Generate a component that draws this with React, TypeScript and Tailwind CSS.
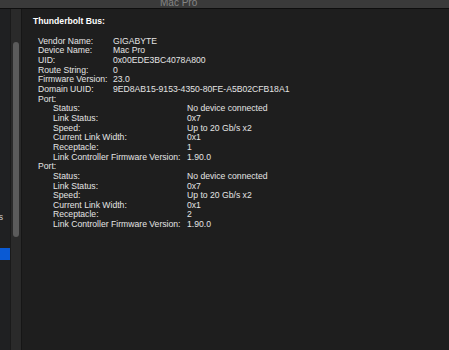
const busInfo: [string, string][] = [
  ["Vendor Name:", "GIGABYTE"],
  ["Device Name:", "Mac Pro"],
  ["UID:", "0x00EDE3BC4078A800"],
  ["Route String:", "0"],
  ["Firmware Version:", "23.0"],
  ["Domain UUID:", "9ED8AB15-9153-4350-80FE-A5B02CFB18A1"],
];

const ports: [string, string][][] = [
  [
    ["Status:", "No device connected"],
    ["Link Status:", "0x7"],
    ["Speed:", "Up to 20 Gb/s x2"],
    ["Current Link Width:", "0x1"],
    ["Receptacle:", "1"],
    ["Link Controller Firmware Version:", "1.90.0"],
  ],
  [
    ["Status:", "No device connected"],
    ["Link Status:", "0x7"],
    ["Speed:", "Up to 20 Gb/s x2"],
    ["Current Link Width:", "0x1"],
    ["Receptacle:", "2"],
    ["Link Controller Firmware Version:", "1.90.0"],
  ],
];

export default function App() {
  return (
    <div
      className="w-[449px] h-[350px] flex flex-col bg-[#1e1e1e] overflow-hidden text-[8.65px] leading-[9.65px] text-[#e4e4e4]"
      style={{ fontFamily: '"Liberation Sans", Arial, sans-serif' }}
    >
      {/* title bar, cut off at the top */}
      <div className="h-[9px] shrink-0 bg-[#3a3a3a] border-b border-[#0e0e0e] overflow-hidden flex items-end pl-[160px]">
        <span className="text-[10px] leading-[10px] text-[#858585] whitespace-nowrap">Mac Pro</span>
      </div>

      <div className="flex flex-1 min-h-0">
        {/* sidebar edge */}
        <div className="w-[10px] shrink-0 bg-[#1f2022] overflow-hidden flex flex-col">
          <div className="mt-[204px] flex justify-end pr-[7px] whitespace-nowrap text-[#cfcfcf]">Thunderbolts</div>
          <div className="mt-[25px] h-[12px] bg-[#0a5ad4]" />
        </div>

        {/* scrollbar */}
        <div className="w-[12px] shrink-0 bg-[#2a2a2a] border-l border-[#1a1a1a] border-r border-r-[#161616]">
          <div className="mt-[33px] ml-[2px] w-[6px] h-[195px] rounded-full bg-[#5b5b5b]" />
        </div>

        {/* content */}
        <div className="flex-1 pl-[11px] pt-[8px]">
          <div className="font-bold text-white">Thunderbolt Bus:</div>
          <div className="mt-[10px] pl-[5px]">
            {busInfo.map(([k, v]) => (
              <div key={k} className="flex whitespace-nowrap">
                <span className="w-[75px] shrink-0">{k}</span>
                <span>{v}</span>
              </div>
            ))}
            {ports.map((rows, i) => (
              <div key={i}>
                <div>Port:</div>
                {rows.map(([k, v]) => (
                  <div key={k} className="flex whitespace-nowrap pl-[15px]">
                    <span className="w-[134px] shrink-0">{k}</span>
                    <span>{v}</span>
                  </div>
                ))}
              </div>
            ))}
          </div>
        </div>
      </div>
    </div>
  );
}
